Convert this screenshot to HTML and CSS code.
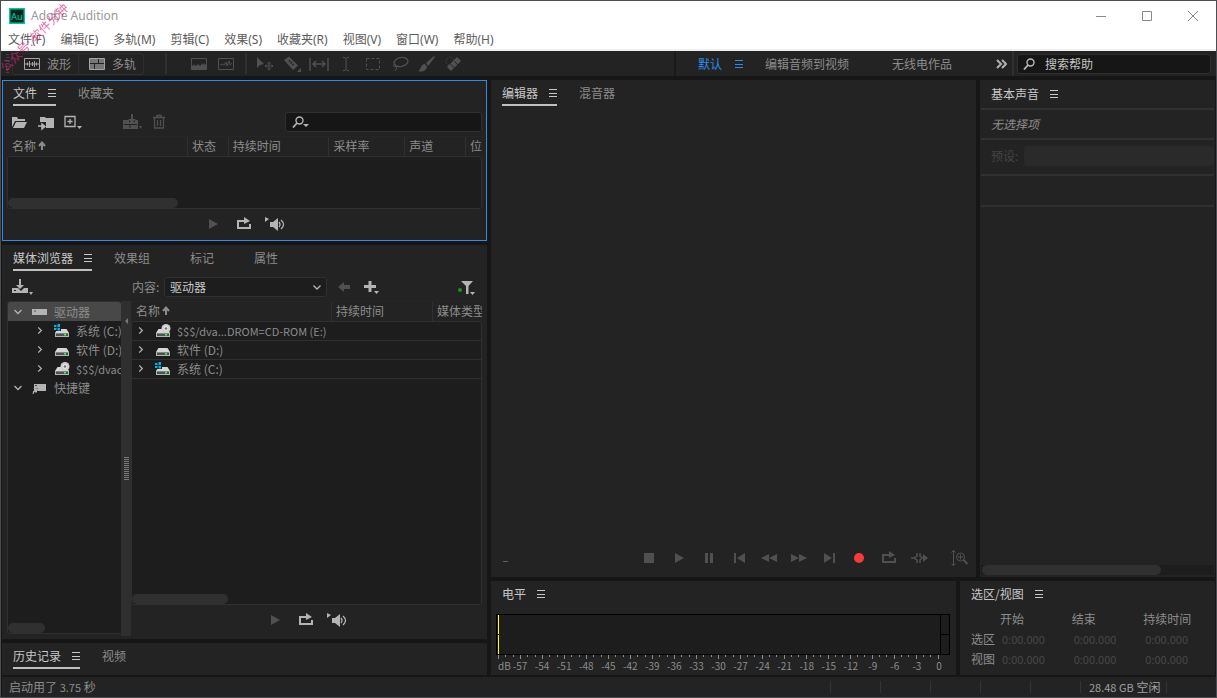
FILE: index.html
```html
<!DOCTYPE html>
<html lang="zh-CN">
<head>
    <meta charset="UTF-8">
    <meta name="viewport" content="width=device-width, initial-scale=1.0">
    <title>Adobe Audition</title>
    <link rel="stylesheet" href="styles.css">
</head>
<body>

    <!-- Shared icons -->
    <svg class="sprite" aria-hidden="true">
        <symbol id="i-menu" viewBox="0 0 8 8"><path d="M0 .5h8M0 4.5h8M0 7.5h8" stroke="currentColor" fill="none"/></symbol>
        <symbol id="i-play" viewBox="0 0 20 16"><path d="M6 3l9 5-9 5z" fill="currentColor"/></symbol>
        <symbol id="i-loop" viewBox="0 0 20 16"><path d="M8 5H4v7h12V8" stroke="currentColor" stroke-width="2" fill="none"/><path d="M8 4h2V1l6 4-6 3V6H8z" fill="currentColor"/></symbol>
        <symbol id="i-auto" viewBox="0 0 22 16"><path d="M1 1l4 2-4 3zM6 6h3l5-4v13l-5-4H6z" fill="currentColor"/><path d="M15 6q2 2.500 0 5M17 4q5 4.500 0 9" stroke="currentColor" stroke-width="1.300" fill="none"/></symbol>
        <symbol id="i-right" viewBox="0 0 8 10"><path d="M2 1.500L5.500 5 2 8.500" stroke="currentColor" stroke-width="1.400" fill="none"/></symbol>
        <symbol id="i-down" viewBox="0 0 8 8"><path d="M.5 2.500L4 6l3.500-3.500" stroke="currentColor" stroke-width="1.300" fill="none"/></symbol>
        <symbol id="i-up" viewBox="0 0 8 10"><path d="M4 9V2M1 5l3-3.500L7 5" stroke="currentColor" stroke-width="2" fill="none"/></symbol>
        <symbol id="i-find" viewBox="0 0 12 12"><circle cx="7.500" cy="4.500" r="3.500" stroke="currentColor" stroke-width="1.400" fill="none"/><path d="M5 7L1 11.500" stroke="currentColor" stroke-width="1.800"/></symbol>
        <symbol id="i-disk" viewBox="0 0 16 14"><path d="M3.500 5h9L15 9H1z" fill="#d6d6d6"/><path d="M1 9h14v4H1z" fill="#b4b4b4"/><path d="M2 9.500h12v2.500H2z" fill="#4c5450"/><path d="M10 10h2v1.500h-2z" fill="#3f4"/></symbol>
        <symbol id="i-sys" viewBox="0 0 16 14"><use href="#i-disk"/><path d="M0 0h7v7H0z" fill="#1d1d1d"/><path d="M0 1h2.500v2H0zM3.500 0H6v3H3.500zM0 4h2.500v2H0zM3.500 4H6v2.500H3.500z" fill="#00b4ec"/></symbol>
        <symbol id="i-rom" viewBox="0 0 16 14"><use href="#i-disk"/><circle cx="11" cy="4.500" r="4.500" fill="#cfcfcf"/><circle cx="11" cy="4.500" r="1.800" fill="#777" stroke="#fff" stroke-width=".8"/></symbol>
    </svg>

    <header class="titlebar">
        <svg class="logo" viewBox="0 0 16 16"><rect x=".75" y=".75" width="14.500" height="14.500" fill="#00241e" stroke="#00c8a0" stroke-width="1.500"/><text x="8" y="11.500" text-anchor="middle">Au</text></svg>
        <span class="app-name">Adobe Audition</span>
        <div class="window-buttons">
            <button aria-label="最小化"><svg viewBox="0 0 12 12"><path d="M1 6.500h10" /></svg></button>
            <button aria-label="最大化"><svg viewBox="0 0 12 12"><path d="M1.500 1.500h9v9h-9z"/></svg></button>
            <button aria-label="关闭"><svg viewBox="0 0 12 12"><path d="M1 1l10 10M11 1L1 11"/></svg></button>
        </div>
    </header>

    <nav class="menubar">
        <button>文件(F)</button>
        <button>编辑(E)</button>
        <button>多轨(M)</button>
        <button>剪辑(C)</button>
        <button>效果(S)</button>
        <button>收藏夹(R)</button>
        <button>视图(V)</button>
        <button>窗口(W)</button>
        <button>帮助(H)</button>
    </nav>

    <div class="toolbar">
        <span class="grip"></span>
        <div class="modes">
            <button><svg viewBox="0 0 16 12"><path d="M.5.5h15v11H.5zM1 6h14M3.500 4.500v3M5.500 3v6M8.500 4v4M10.500 3v6M12.500 4.500v3" stroke="currentColor" fill="none"/></svg>波形</button>
            <button><svg viewBox="0 0 16 12"><path d="M.5.5h15v11H.5z" stroke="currentColor" fill="#777"/><path d="M1 5.500h14M9.500 1v5M5.500 6v5" stroke="#232323" /></svg>多轨</button>
        </div>
        <div class="tools views">
            <button aria-label="频谱频率"><svg viewBox="0 0 20 16"><path d="M2.500 2.500h15v11h-15z" fill="none" stroke="currentColor"/><path d="M3 13V9l1 1 1-2 1 2 1-1 1 1 1-3 1 3 1-1 1 1 1-3 1 2 1-2 1 2 1-1v5z" fill="currentColor"/></svg></button>
            <button aria-label="频谱音调"><svg viewBox="0 0 20 16"><path d="M2.500 2.500h15v11h-15zM4 9l2-1 2 1 2-3 1 4 2-5 1 4 2-2" fill="none" stroke="currentColor"/></svg></button>
        </div>
        <div class="tools">
            <button aria-label="移动"><svg viewBox="0 0 20 16"><path d="M2 1v11l3-3 4-1z" fill="currentColor"/><path d="M14 6v8M10 10h8M12.500 7.500L14 6l1.500 1.500M12.500 12.500L14 14l1.500-1.500M11.500 8.500L10 10l1.500 1.500M16.500 8.500L18 10l-1.500 1.500" fill="none" stroke="currentColor"/></svg></button>
            <button aria-label="切割"><svg viewBox="0 0 20 16"><path d="M2 4l5-3.500 9 9L11 14z" fill="currentColor"/><path d="M7 4.500l5 5" stroke="#232323" stroke-width="2" stroke-dasharray="1.500 1"/><path d="M19 12v4h-4z" fill="currentColor"/></svg></button>
            <button aria-label="滑动"><svg viewBox="0 0 20 16"><path d="M1 2v13M19 2v13M4 8h12M7 5L4 8l3 3M13 5l3 3-3 3" fill="none" stroke="currentColor" stroke-width="1.400"/></svg></button>
            <button aria-label="时间选择"><svg viewBox="0 0 20 16"><path d="M7 1.500h2l1 1 1-1h2M7 14.500h2l1-1 1 1h2M10 2v12" fill="none" stroke="currentColor"/></svg></button>
            <button aria-label="框选"><svg viewBox="0 0 20 16"><path d="M3.500 2.500h13v11h-13z" fill="none" stroke="currentColor" stroke-dasharray="3 2"/></svg></button>
            <button aria-label="套索"><svg viewBox="0 0 20 16"><ellipse cx="11" cy="6" rx="7" ry="4.500" transform="rotate(-12 11 6)" fill="none" stroke="currentColor" stroke-width="1.300"/><path d="M4 8q-1 3 1 3t1-2q2 3-1 6" fill="none" stroke="currentColor"/></svg></button>
            <button aria-label="画笔"><svg viewBox="0 0 20 16"><path d="M17 0L9 7l2 3 7-9zM8 8q-3 0-4 3-1 3-3 4 7 2 9-4z" fill="currentColor"/></svg></button>
            <button aria-label="污点修复"><svg viewBox="0 0 20 16"><path d="M3 11L13 1l4 4L7 15z" fill="currentColor"/><path d="M6.500 8l4 4M10 5l4 4" stroke="#232323"/><circle cx="6" cy="5" r="4" fill="none" stroke="currentColor" stroke-dasharray="1 1.500"/></svg></button>
        </div>
        <div class="workspaces">
            <button class="current">默认<svg class="menu-icon"><use href="#i-menu"/></svg></button>
            <button>编辑音频到视频</button>
            <button>无线电作品</button>
            <button class="more" aria-label="更多"><svg viewBox="0 0 12 10"><path d="M2 1l4 4-4 4M7 1l4 4-4 4" fill="none" stroke="currentColor" stroke-width="2"/></svg></button>
        </div>
        <label class="help-search">
            <svg viewBox="0 0 12 12"><use href="#i-find"/></svg>
            <input type="text" placeholder="搜索帮助" aria-label="搜索帮助">
        </label>
    </div>

    <main class="workspace">
        <div class="column">
            <!-- Files -->
            <section class="panel files focused">
                <div class="tabs">
                    <button class="active">文件<svg class="menu-icon"><use href="#i-menu"/></svg></button>
                    <button>收藏夹</button>
                </div>
                <div class="panel-bar">
                    <button class="icon-btn" aria-label="打开文件"><svg viewBox="0 0 20 18"><path d="M2 14V4h5l1 2h7v2H5z" fill="currentColor"/><path d="M6 9h11l-3 6H3z" fill="currentColor"/></svg></button>
                    <button class="icon-btn" aria-label="导入文件"><svg viewBox="0 0 20 18"><path d="M3 9V4h5l1 1h8v10h-8V9z" fill="currentColor"/><path d="M1 13h5M5 11l3 2.500L5 16z" fill="currentColor" stroke="currentColor" stroke-width="1.500"/></svg></button>
                    <button class="icon-btn" aria-label="新建文件"><svg viewBox="0 0 20 18"><path d="M1 3.500h10v10H1zM6 6v5M3.500 8.500h5" fill="none" stroke="currentColor" stroke-width="1.300"/><path d="M13 13h5l-2.500 3z" fill="currentColor"/></svg></button>
                    <button class="icon-btn insert" aria-label="插入到多轨" disabled><svg viewBox="0 0 20 18"><path d="M1 7h15v9H1z" fill="currentColor"/><path d="M2 11.500h13M8 12v3" stroke="#232323"/><path d="M5 6h2v3h6V6h2V5H5z" fill="#232323"/><path d="M9 1h2v5h3l-4 4-4-4h3z" fill="currentColor"/><path d="M17 13h3l-1.500 3z" fill="currentColor"/></svg></button>
                    <button class="icon-btn" aria-label="删除" disabled><svg viewBox="0 0 20 18"><path d="M4 4.500h12M8 4V2.500h4V4M5.500 5v10h9V5M8.500 7v6M11.500 7v6" fill="none" stroke="currentColor" stroke-width="1.300"/></svg></button>
                    <label class="file-search">
                        <svg viewBox="0 0 18 12"><use href="#i-find" width="12" height="12"/><path d="M11 8h6l-3 3z" fill="currentColor"/></svg>
                        <input type="text" aria-label="搜索文件">
                    </label>
                </div>
                <table class="list-head">
                    <thead>
                        <tr>
                            <th class="w-name">名称<svg class="sort"><use href="#i-up"/></svg></th>
                            <th class="w-state">状态</th>
                            <th class="w-length">持续时间</th>
                            <th class="w-rate">采样率</th>
                            <th class="w-chan">声道</th>
                            <th>位</th>
                        </tr>
                    </thead>
                </table>
                <div class="list-box"><span class="thumb"></span></div>
                <div class="preview">
                    <button class="off" aria-label="播放"><svg><use href="#i-play"/></svg></button>
                    <button aria-label="循环播放"><svg><use href="#i-loop"/></svg></button>
                    <button aria-label="自动播放"><svg class="wide"><use href="#i-auto"/></svg></button>
                </div>
            </section>

            <!-- Media browser -->
            <section class="panel media">
                <div class="tabs">
                    <button class="active">媒体浏览器<svg class="menu-icon"><use href="#i-menu"/></svg></button>
                    <button>效果组</button>
                    <button>标记</button>
                    <button>属性</button>
                </div>
                <div class="panel-bar">
                    <button class="icon-btn import" aria-label="导入"><svg viewBox="0 0 22 18"><path d="M1 10h6l3 3 3-3h4v5H1z" fill="currentColor"/><path d="M8 1h2v6h3l-4 4-4-4h3z" fill="currentColor"/><path d="M3 12h2v1H3z" fill="#232323"/><path d="M18 14h4l-2 3z" fill="currentColor"/></svg></button>
                    <label class="content-label" for="content">内容:</label>
                    <span class="select">
                        <select id="content"><option>驱动器</option></select>
                        <svg><use href="#i-down"/></svg>
                    </span>
                    <button class="icon-btn" aria-label="后退" disabled><svg viewBox="0 0 20 18"><path d="M4 9l6-5v3h6v4h-6v3z" fill="currentColor"/></svg></button>
                    <button class="icon-btn" aria-label="添加快捷键"><svg viewBox="0 0 20 18"><path d="M3 8.500h12M9 3v11" stroke="currentColor" stroke-width="3"/><path d="M13 13h5l-2.500 3z" fill="currentColor"/></svg></button>
                    <button class="icon-btn filter" aria-label="筛选"><svg viewBox="0 0 20 18"><path d="M5 3h12l-4.500 5v8H10V8z" fill="currentColor"/><path d="M14 14h5l-2.500 3z" fill="currentColor"/><circle cx="4" cy="12" r="2" fill="#17961c"/></svg></button>
                </div>
                <div class="browser">
                    <div class="tree">
                        <ul>
                            <li class="selected"><svg class="arrow"><use href="#i-down"/></svg><svg class="drive" viewBox="0 0 16 14"><path d="M0 4h15v6H0z" fill="#b4b4b4"/><path d="M2 5.500h2v1H2z" fill="#555"/></svg>驱动器</li>
                            <li class="child"><svg class="arrow"><use href="#i-right"/></svg><svg class="drive"><use href="#i-sys"/></svg>系统 (C:)</li>
                            <li class="child"><svg class="arrow"><use href="#i-right"/></svg><svg class="drive"><use href="#i-disk"/></svg>软件 (D:)</li>
                            <li class="child"><svg class="arrow"><use href="#i-right"/></svg><svg class="drive"><use href="#i-rom"/></svg><span class="latin">$$$/dvac</span></li>
                            <li><svg class="arrow"><use href="#i-down"/></svg><svg class="drive" viewBox="0 0 16 14"><path d="M2 3h12v7H6V7H2z" fill="#b4b4b4"/><path d="M3 4h2v1H3z" fill="#444"/><path d="M1 13q0-4 3-4M2 7.500l4 .5-2 3.500z" fill="#b4b4b4" stroke="#b4b4b4"/></svg>快捷键</li>
                        </ul>
                        <span class="thumb"></span>
                    </div>
                    <div class="splitter"><svg viewBox="0 0 4 6"><path d="M4 0v6L1 3z" fill="#777"/></svg><span class="dots"></span></div>
                    <div class="listing">
                        <table class="list-head">
                            <thead>
                                <tr>
                                    <th class="w-drive">名称<svg class="sort"><use href="#i-up"/></svg></th>
                                    <th class="w-length">持续时间</th>
                                    <th>媒体类型</th>
                                </tr>
                            </thead>
                        </table>
                        <div class="list-box">
                            <ul>
                                <li><svg class="arrow"><use href="#i-right"/></svg><svg class="drive"><use href="#i-rom"/></svg><span class="latin">$$$/dva...DROM=CD-ROM (E:)</span></li>
                                <li><svg class="arrow"><use href="#i-right"/></svg><svg class="drive"><use href="#i-disk"/></svg>软件 (D:)</li>
                                <li><svg class="arrow"><use href="#i-right"/></svg><svg class="drive"><use href="#i-sys"/></svg>系统 (C:)</li>
                            </ul>
                            <span class="thumb"></span>
                        </div>
                        <div class="preview">
                            <button class="off" aria-label="播放"><svg><use href="#i-play"/></svg></button>
                            <button aria-label="循环播放"><svg><use href="#i-loop"/></svg></button>
                            <button aria-label="自动播放"><svg class="wide"><use href="#i-auto"/></svg></button>
                        </div>
                    </div>
                </div>
            </section>

            <!-- History -->
            <section class="panel history">
                <div class="tabs">
                    <button class="active">历史记录<svg class="menu-icon"><use href="#i-menu"/></svg></button>
                    <button>视频</button>
                </div>
            </section>
        </div>

        <div class="column">
            <div class="upper">
                <!-- Editor -->
                <section class="panel editor">
                    <div class="tabs">
                        <button class="active">编辑器<svg class="menu-icon"><use href="#i-menu"/></svg></button>
                        <button>混音器</button>
                    </div>
                    <div class="transport">
                        <span class="timecode"></span>
                        <div class="transport-buttons">
                            <button aria-label="停止"><svg viewBox="0 0 20 16"><path d="M5 3h10v10H5z" fill="currentColor"/></svg></button>
                            <button aria-label="播放"><svg><use href="#i-play"/></svg></button>
                            <button aria-label="暂停"><svg viewBox="0 0 20 16"><path d="M6 3h3v10H6zM11 3h3v10h-3z" fill="currentColor"/></svg></button>
                            <button aria-label="移到上一个"><svg viewBox="0 0 20 16"><path d="M5 3h2v10H5zM16 3v10L8 8z" fill="currentColor"/></svg></button>
                            <button aria-label="快退"><svg viewBox="0 0 20 16"><path d="M10 4v8L2 8zM18 4v8l-8-4z" fill="currentColor"/></svg></button>
                            <button aria-label="快进"><svg viewBox="0 0 20 16"><path d="M2 4v8l8-4zM10 4v8l8-4z" fill="currentColor"/></svg></button>
                            <button aria-label="移到下一个"><svg viewBox="0 0 20 16"><path d="M14 3h2v10h-2zM5 3v10l8-5z" fill="currentColor"/></svg></button>
                            <button class="record" aria-label="录制"><svg viewBox="0 0 20 16"><circle cx="10" cy="8" r="5" fill="currentColor"/></svg></button>
                            <button aria-label="循环播放"><svg><use href="#i-loop"/></svg></button>
                            <button aria-label="跳过所选项目"><svg viewBox="0 0 20 16"><path d="M2 8h3M12 8h4M8 3v3L5 8l3 2v3M11 3v3l2 2-2 2v3" fill="none" stroke="currentColor" stroke-width="1.500"/><path d="M14 4l5 4-5 4z" fill="currentColor"/></svg></button>
                        </div>
                        <button class="zoom" aria-label="放大振幅"><svg viewBox="0 0 20 16"><path d="M3.500 0v16M1.500 2.500l2-2 2 2M1.500 13.500l2 2 2-2M8 7h5M10.500 4.500v5" fill="none" stroke="currentColor"/><circle cx="10.500" cy="7" r="4" fill="none" stroke="currentColor"/><path d="M13.500 10l4 4" stroke="currentColor" stroke-width="2"/></svg></button>
                    </div>
                </section>

                <!-- Essential sound -->
                <section class="panel sound">
                    <div class="tabs">
                        <button class="title">基本声音<svg class="menu-icon"><use href="#i-menu"/></svg></button>
                    </div>
                    <div class="sound-row none"><em>无选择项</em></div>
                    <div class="sound-row preset">
                        <label for="preset">预设:</label>
                        <select id="preset" disabled></select>
                    </div>
                    <div class="sound-row blank"></div>
                    <div class="sound-body"></div>
                    <div class="track"><span class="thumb"></span></div>
                </section>
            </div>

            <div class="lower">
                <!-- Levels -->
                <section class="panel levels">
                    <div class="tabs">
                        <button class="title">电平<svg class="menu-icon"><use href="#i-menu"/></svg></button>
                    </div>
                    <div class="meter">
                        <div class="bars"><i></i><i></i></div>
                        <div class="clip"><i></i><i></i></div>
                    </div>
                    <div class="ticks" id="ticks"></div>
                    <div class="scale" id="scale"></div>
                </section>

                <!-- Selection / view -->
                <section class="panel selection">
                    <div class="tabs">
                        <button class="title">选区/视图<svg class="menu-icon"><use href="#i-menu"/></svg></button>
                    </div>
                    <table>
                        <tr><td></td><th>开始</th><th>结束</th><th>持续时间</th></tr>
                        <tr><th>选区</th><td>0:00.000</td><td>0:00.000</td><td>0:00.000</td></tr>
                        <tr><th>视图</th><td>0:00.000</td><td>0:00.000</td><td>0:00.000</td></tr>
                    </table>
                </section>
            </div>
        </div>
    </main>

    <footer class="status">
        <span class="message">启动用了 <span class="latin">3.75</span> 秒</span>
        <span class="cell"></span>
        <span class="cell"></span>
        <span class="cell"></span>
        <span class="cell"></span>
        <span class="cell"></span>
        <span class="cell space"><span class="latin">28.48 GB</span> 空闲</span>
        <span class="cell"></span>
    </footer>

    <div class="watermark">公众号: 软件分钟</div>

    <script>
        // Level scale: one tick per dB, a label every 3 dB
        const ticks = document.getElementById('ticks');
        const scale = document.getElementById('scale');

        for (let db = -60; db <= 0; db++) {
            const tick = document.createElement('i');
            ticks.appendChild(tick);

            if (db % 3 === 0) {
                tick.className = 'major';
                const label = document.createElement('span');
                label.textContent = db === -60 ? 'dB' : db;
                scale.appendChild(label);
            }
        }
    </script>
</body>
</html>
```

FILE: styles.css
```css
* {
    margin: 0;
    padding: 0;
    box-sizing: border-box;
}

body {
    display: flex;
    flex-direction: column;
    height: 100vh;
    overflow: hidden;
    border: 1px solid #4a4e52;
    background: #161616;
    color: #8c8c8c;
    font: 12px/18px "Noto Sans CJK SC", sans-serif;
}

button, input, select {
    border: none;
    background: none;
    color: inherit;
    font: inherit;
    outline: none;
}

button {
    display: flex;
    align-items: center;
    white-space: nowrap;
}

svg {
    display: block;
    flex: none;
}

ul {
    list-style: none;
}

th {
    font-weight: normal;
    text-align: left;
}

.latin {
    font-size: 11px;
}

.sprite {
    position: absolute;
    width: 0;
    height: 0;
}

/* Title bar and menus */
.titlebar {
    display: flex;
    align-items: center;
    height: 29px;
    padding-left: 8px;
    background: #fff;
    color: #999;
}

.logo {
    width: 16px;
    height: 16px;
    margin-right: 6px;
}

.logo text {
    fill: #00dcb0;
    font: 9px "Noto Sans", sans-serif;
}

.app-name {
    font: 12px/18px "Noto Sans", sans-serif;
}

.window-buttons {
    display: flex;
    margin-left: auto;
}

.window-buttons button {
    justify-content: center;
    width: 46px;
    height: 28px;
}

.window-buttons svg {
    width: 12px;
    height: 12px;
    fill: none;
    stroke: #8a8a8a;
}

.menubar {
    display: flex;
    gap: 15px;
    height: 21px;
    padding: 1px 0 0 7px;
    background: #fff;
    border-bottom: 2px solid #f0f0f0;
    color: #5c5c5c;
    font-family: "Noto Sans", "Noto Sans CJK SC", sans-serif;
}

/* Toolbar */
.toolbar {
    display: flex;
    align-items: center;
    flex: none;
    height: 25px;
    margin-bottom: 4px;
    background: #232323;
}

.grip {
    width: 3px;
    height: 19px;
    margin: 0 3px 0 5px;
    background: repeating-linear-gradient(#444 0 1px, transparent 1px 3px);
}

.modes {
    display: flex;
    height: 22px;
    border: 1px solid #2f2f2f;
    border-radius: 3px;
}

.modes button {
    gap: 7px;
    padding: 0 7px 0 11px;
}

.modes button + button {
    padding-left: 10px;
    border-left: 1px solid #2f2f2f;
}

.modes svg {
    width: 16px;
    height: 12px;
    color: #a4a4a4;
}

.tools {
    display: flex;
    height: 21px;
    padding-left: 4px;
    border-left: 2px solid #303030;
    color: #505050;
}

.tools.views {
    margin-left: 21px;
    padding-left: 18px;
    padding-right: 6px;
}

.tools button {
    justify-content: center;
    width: 27px;
}

.tools svg {
    width: 20px;
    height: 16px;
}

.workspaces {
    display: flex;
    align-items: center;
    height: 25px;
    width: 340px;
    margin-left: auto;
    padding: 0 14px 0 22px;
    border-left: 2px solid #191919;
    border-right: 2px solid #303030;
}

.workspaces button {
    margin-right: 43px;
}

.workspaces .current {
    gap: 13px;
    margin-right: 22px;
    color: #2d8ceb;
}

.workspaces .more {
    margin: 0 0 0 auto;
    color: #b0b0b0;
}

.more svg {
    width: 12px;
    height: 10px;
}

.menu-icon {
    width: 8px;
    height: 8px;
}

.help-search {
    display: flex;
    align-items: center;
    gap: 10px;
    width: 194px;
    height: 20px;
    margin: 0 5px 0 3px;
    padding-left: 5px;
    background: #161616;
    border: 1px solid #303030;
    border-radius: 3px;
}

.help-search svg {
    width: 12px;
    height: 12px;
    color: #b8b8b8;
}

.help-search input {
    flex: 1;
    min-width: 0;
}

.help-search input::placeholder {
    color: #c4c4c4;
}

/* Panels */
.workspace {
    display: grid;
    grid-template-columns: 485fr 724fr;
    gap: 4px;
    flex: 1;
    min-height: 0;
    padding: 0 1px;
}

.column {
    display: flex;
    flex-direction: column;
    gap: 4px;
    min-width: 0;
    min-height: 0;
}

.upper, .lower {
    display: grid;
    gap: 4px;
}

.upper {
    flex: 1;
    min-height: 0;
    grid-template-columns: 485fr 235fr;
}

.lower {
    grid-template-columns: 465fr 255fr;
}

.panel {
    display: flex;
    flex-direction: column;
    min-width: 0;
    min-height: 0;
    border: 1px solid #232323;
    background: #232323;
}

.focused {
    border-color: #2d8ceb;
}

.tabs {
    display: flex;
    flex: none;
    gap: 22px;
    height: 25px;
    padding-left: 10px;
}

.tabs button {
    padding-right: 18px;
    border-bottom: 2px solid transparent;
}

.tabs .active, .tabs .title {
    gap: 11px;
    padding-right: 0;
    color: #c8c8c8;
}

.tabs .active {
    border-color: #c0c0c0;
}

.panel-bar {
    display: flex;
    align-items: center;
    flex: none;
    height: 30px;
    padding: 1px 4px 0 3px;
    color: #b4b4b4;
}

.icon-btn {
    justify-content: center;
    width: 27px;
    height: 20px;
}

.icon-btn svg {
    width: 20px;
    height: 18px;
}

.icon-btn:disabled {
    color: #505050;
}

.insert {
    margin-left: 31px;
}

.file-search {
    display: flex;
    align-items: center;
    width: 197px;
    height: 20px;
    margin-left: auto;
    padding-left: 6px;
    background: #161616;
    border: 1px solid #303030;
    border-radius: 3px;
}

.file-search svg {
    width: 18px;
    height: 12px;
}

.file-search input {
    flex: 1;
    min-width: 0;
}

/* Lists */
.list-head {
    width: 100%;
    table-layout: fixed;
    border-collapse: collapse;
}

.list-head th {
    height: 19px;
    padding-left: 4px;
    overflow: hidden;
    white-space: nowrap;
    border-top: 1px solid #262626;
    border-left: 1px solid #303030;
    line-height: 16px;
}

.list-head th:first-child {
    border-left-color: transparent;
}

.sort {
    display: inline-block;
    width: 8px;
    height: 10px;
    margin-left: 2px;
}

.w-name { width: 181px; }
.w-state { width: 41px; }
.w-length { width: 101px; }
.w-rate { width: 76px; }
.w-chan { width: 61px; }
.w-drive { width: 200px; }

.list-box {
    display: flex;
    flex-direction: column;
    flex: 1;
    min-height: 0;
    background: #1d1d1d;
    border: 1px solid #303030;
    border-radius: 3px;
}

.thumb {
    display: block;
    width: 36%;
    height: 10px;
    margin-top: auto;
    border-radius: 5px;
    background: #303030;
}

.files {
    height: 161px;
    flex: none;
}

.files .list-head, .files .list-box {
    width: auto;
    margin: 0 4px;
}

.preview {
    display: flex;
    justify-content: center;
    flex: none;
    height: 31px;
    padding-right: 2px;
    color: #b4b4b4;
}

.preview button {
    justify-content: center;
    width: 31px;
    height: 30px;
}

.preview svg, .transport svg {
    width: 20px;
    height: 16px;
}

.preview .wide {
    width: 22px;
}

.preview .off {
    color: #505050;
}

/* Media browser */
.media {
    flex: 1;
}

.import {
    margin-left: 2px;
}

.import svg {
    width: 22px;
}

.content-label {
    margin-left: 97px;
    width: 32px;
    color: #8c8c8c;
}

.select {
    display: flex;
    align-items: center;
    width: 163px;
    height: 20px;
    margin-right: 3px;
    padding-right: 5px;
    background: #1d1d1d;
    border: 1px solid #303030;
    border-radius: 3px;
}

.select select {
    flex: 1;
    appearance: none;
    padding-left: 5px;
    color: #c8c8c8;
}

.select svg {
    width: 8px;
    height: 8px;
}

.icon-btn.filter {
    margin-left: auto;
    margin-right: 3px;
}

.browser {
    display: flex;
    flex: 1;
    min-height: 0;
    padding: 0 4px 2px;
}

.tree {
    display: flex;
    flex-direction: column;
    width: 114px;
    margin-bottom: 2px;
    overflow: hidden;
    background: #1d1d1d;
    border: 1px solid #303030;
    border-right: none;
    border-radius: 3px;
}

.tree li, .listing li {
    display: flex;
    align-items: center;
    height: 19px;
    white-space: nowrap;
}

.tree li {
    padding-left: 6px;
}

.tree .child {
    padding-left: 28px;
}

.tree .selected {
    background: #484848;
}

.arrow {
    width: 8px;
    height: 9px;
    margin-right: 10px;
    color: #b4b4b4;
}

.drive {
    width: 16px;
    height: 14px;
    margin-right: 6px;
}

.tree .thumb {
    width: 37px;
}

.splitter {
    display: flex;
    flex-direction: column;
    align-items: center;
    width: 10px;
    padding: 17px 0 23px;
    background: #2f2f2f;
}

.splitter svg {
    width: 4px;
    height: 6px;
}

.dots {
    width: 5px;
    height: 24px;
    margin: auto;
    background: repeating-linear-gradient(#777 0 1px, transparent 1px 2px);
}

.listing {
    display: flex;
    flex-direction: column;
    flex: 1;
    min-width: 0;
}

.listing li {
    padding-left: 5px;
    border-bottom: 1px solid #303030;
}

.listing .thumb {
    width: 96px;
}

/* History */
.history {
    flex: none;
    height: 32px;
}

/* Editor */
.editor {
    justify-content: space-between;
}

.transport {
    display: flex;
    align-items: center;
    height: 36px;
    padding-left: 11px;
    color: #505050;
}

.transport button {
    justify-content: center;
    width: 30px;
    height: 30px;
}

.timecode {
    width: 5px;
    height: 1px;
    margin-top: 6px;
    background: #606060;
}

.transport-buttons {
    display: flex;
    margin-left: auto;
    margin-right: 11px;
}

.record {
    color: #f53b3b;
}

/* Essential sound */
.sound-row {
    display: flex;
    align-items: center;
    flex: none;
    padding-left: 10px;
    border-top: 2px solid #303030;
}

.sound .tabs {
    height: 27px;
}

.none {
    height: 30px;
    color: #8c8c8c;
}

.preset {
    gap: 6px;
    height: 36px;
    padding-bottom: 2px;
    color: #444;
}

.preset select {
    flex: 1;
    height: 20px;
    background: #2a2a2a;
    border-radius: 3px;
    appearance: none;
    opacity: 1;
}

.blank {
    height: 33px;
    border-bottom: 2px solid #303030;
}

.sound-body {
    flex: 1;
}

.track {
    padding-left: 1px;
    margin-bottom: 1px;
    background: #1d1d1d;
}

.track .thumb {
    width: 77%;
}

/* Levels */
.meter {
    display: flex;
    height: 41px;
    margin: 7px 5px 0 4px;
    border: 1px solid #000;
    background: #1d1d1d;
}

.bars {
    display: flex;
    flex-direction: column;
    gap: 1px;
    flex: 1;
    padding-left: 1px;
}

.bars i {
    flex: 1;
    border-left: 1px solid #ff0;
}

.clip {
    display: flex;
    flex-direction: column;
    gap: 1px;
    width: 9px;
    padding-left: 1px;
    background: #000;
}

.clip i {
    flex: 1;
    background: #1d1d1d;
}

.ticks, .scale {
    display: flex;
    justify-content: space-between;
    margin: 0 16px 0 6px;
}

.ticks i {
    width: 1px;
    height: 2px;
    background: #8c8c8c;
}

.ticks .major {
    height: 4px;
}

.scale {
    padding-bottom: 1px;
    font-size: 10px;
    line-height: 14px;
}

.scale span {
    display: flex;
    justify-content: center;
    width: 0;
}

.scale span:first-child {
    justify-content: flex-start;
}

/* Selection / view */
.selection table {
    margin: 2px 0 0 10px;
    border-collapse: collapse;
    table-layout: fixed;
    width: 244px;
}

.selection tr {
    height: 20px;
}

.selection tr > :first-child {
    width: 29px;
}

.selection td {
    padding-left: 2px;
    color: #484848;
    font-size: 11px;
}

/* Status bar */
.status {
    display: flex;
    align-items: center;
    flex: none;
    height: 20px;
    margin: 2px 0 0 1px;
    background: #232323;
}

.message {
    flex: 1;
    padding-left: 7px;
}

.cell {
    width: 50px;
    height: 12px;
    border-left: 1px solid #343434;
}

.cell.space {
    width: 86px;
    padding-left: 8px;
    line-height: 12px;
    color: #a0a0a0;
}

/* Slanted overlay label */
.watermark {
    position: absolute;
    left: 2px;
    top: 62px;
    color: rgba(226, 32, 132, 0.7);
    font-size: 12px;
    line-height: 14px;
    white-space: nowrap;
    transform: rotate(-45deg);
    transform-origin: 0 50%;
    pointer-events: none;
}
```
